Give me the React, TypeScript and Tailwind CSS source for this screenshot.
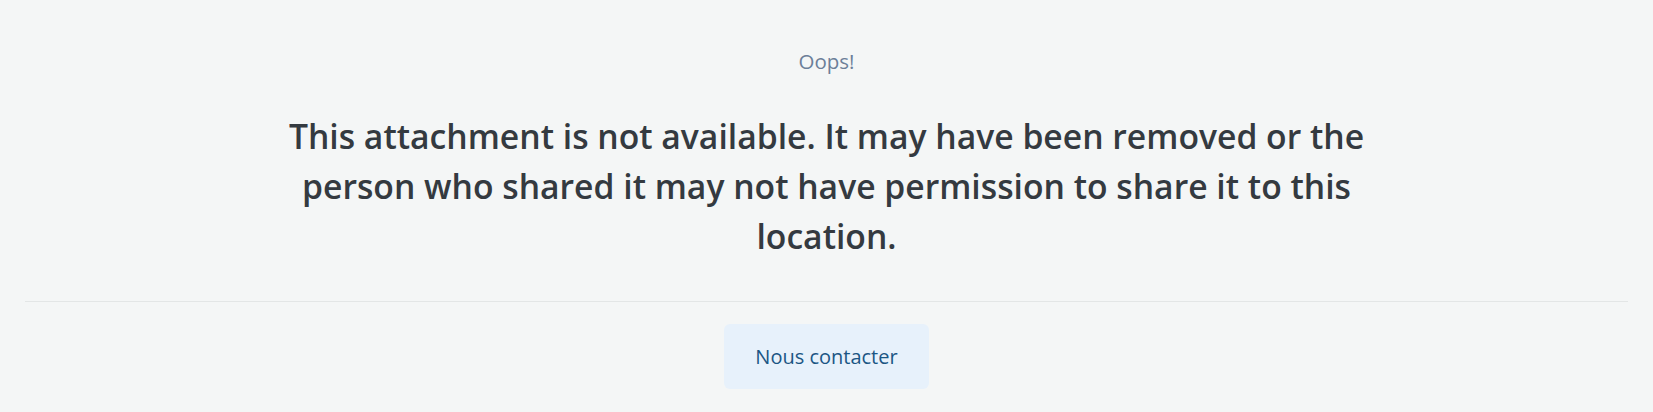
export default function App() {
  return (
    <div className="min-h-[412px] w-full bg-[#f4f6f6] font-['Open_Sans','Noto_Sans',sans-serif]">
      <div className="flex flex-col items-center pt-[46px]">
        <p className="text-[20.5px] leading-[30px] text-[#6c7f99]">Oops!</p>
        <h1 className="mt-[35px] w-[1120px] text-center text-[33.7px] font-semibold leading-[50px] text-[#343a40]">
          This attachment is not available. It may have been removed or the person who shared it may not have permission to share it to this location.
        </h1>
      </div>
      <div className="px-[25px] pt-[40px]">
        <div className="h-px w-full bg-[#e3e6e6]" />
      </div>
      <div className="flex justify-center pt-[22px]">
        <button className="flex h-[65px] items-center rounded-[6px] bg-[#e7f1fb] px-[31px] text-[20px] text-[#1b5684]">
          Nous contacter
        </button>
      </div>
    </div>
  );
}
